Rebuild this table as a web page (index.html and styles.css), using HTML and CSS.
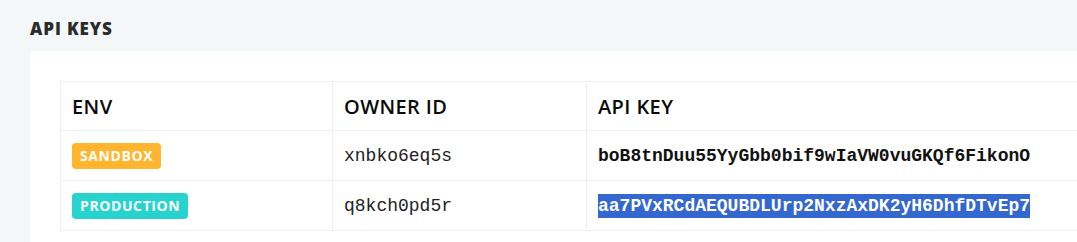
FILE: index.html
```html
<!DOCTYPE html>
<html lang="en">
<head>
<meta charset="utf-8">
<title>API Keys</title>
<link rel="stylesheet" href="styles.css">
</head>
<body>
<main class="page">
  <h2 class="section-title">API KEYS</h2>
  <section class="card">
    <table class="keys">
      <thead>
        <tr>
          <th class="col-env">ENV</th>
          <th class="col-owner">OWNER ID</th>
          <th class="col-key">API KEY</th>
        </tr>
      </thead>
      <tbody>
        <tr>
          <td><span class="badge badge-sandbox">SANDBOX</span></td>
          <td class="mono">xnbko6eq5s</td>
          <td class="mono key">boB8tnDuu55YyGbb0bif9wIaVW0vuGKQf6FikonO</td>
        </tr>
        <tr>
          <td><span class="badge badge-production">PRODUCTION</span></td>
          <td class="mono">q8kch0pd5r</td>
          <td class="mono key"><span class="selected">aa7PVxRCdAEQUBDLUrp2NxzAxDK2yH6DhfDTvEp7</span></td>
        </tr>
      </tbody>
    </table>
  </section>
</main>
</body>
</html>
```

FILE: styles.css
```css
html, body {
  margin: 0;
  padding: 0;
  background: #f4f7f8;
  overflow: hidden;
}

.page {
  width: 1160px;
  padding: 20px 0 0 30px;
  font-family: "Open Sans", Lato, sans-serif;
}

.section-title {
  margin: 0 0 13px 0;
  font-size: 17px;
  line-height: 18px;
  font-weight: 800;
  letter-spacing: 0.9px;
  color: #2b2b2b;
}

.card {
  background: #ffffff;
  border-radius: 5px;
  padding: 30px;
}

.keys {
  border-collapse: collapse;
  width: 1060px;
}

.keys th,
.keys td {
  border: 1px solid #f0f0f0;
  padding: 0 11px;
  height: 49px;
  text-align: left;
  vertical-align: middle;
}

.keys th {
  height: 48px;
  font-size: 20px;
  font-weight: 600;
  letter-spacing: 0.4px;
  color: #0a0a0a;
}

.col-env { width: 249px; }
.col-owner { width: 231px; }

.mono {
  font-family: "Liberation Mono", "Courier New", monospace;
  font-size: 18px;
  color: #222;
}

.key {
  font-weight: 700;
  color: #111;
}

.selected {
  background: #3467d0;
  color: #ffffff;
  padding: 2px 0;
}

.badge {
  display: inline-block;
  height: 26px;
  line-height: 26px;
  padding: 0 8px;
  border-radius: 4px;
  color: #ffffff;
  font-size: 14px;
  font-weight: 700;
  letter-spacing: 0.6px;
}

.badge-sandbox { background: #ffb52e; }
.badge-production { background: #27d3cf; }
```
